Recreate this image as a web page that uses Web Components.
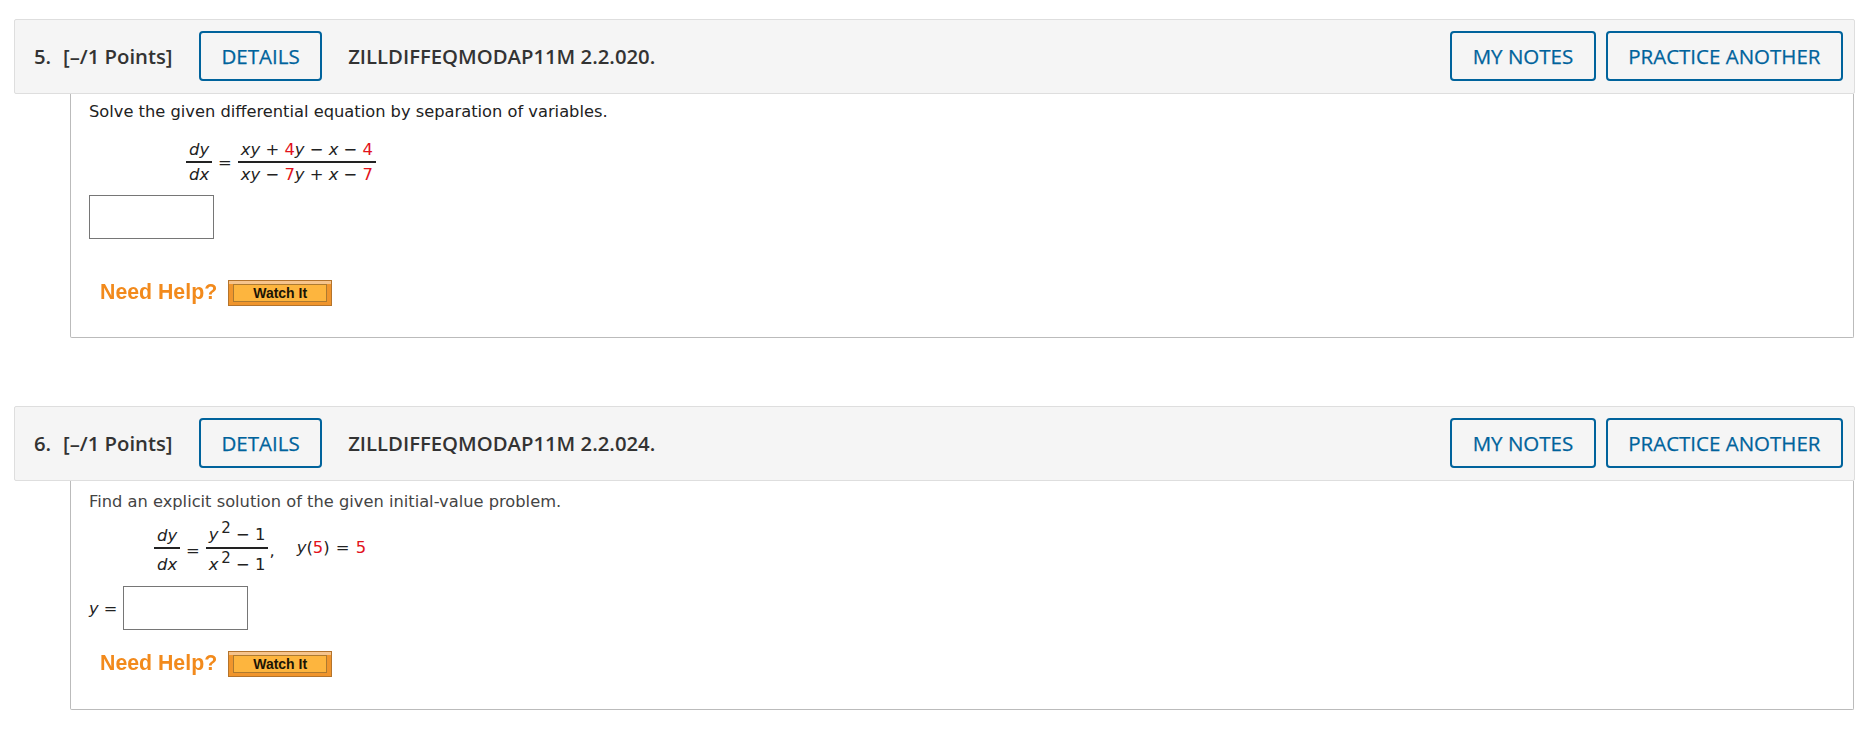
<!DOCTYPE html>
<html>
<head>
<meta charset="utf-8">
<title>Questions</title>
<style>
  body { margin: 0; background: #fff; }
</style>
</head>
<body>
<assignment-page>
  <question-card num="5." code="ZILLDIFFEQMODAP11M 2.2.020." height="244">
    <q-text top="0">Solve the given differential equation by separation of variables.</q-text>
    <q-eq indent="97" top="16" style="--frac-gap:2px">
      <m-frac><i>dy</i><i slot="bottom">dx</i></m-frac>
      <m-op>=</m-op>
      <m-frac><span><i>xy</i> + <m-red>4</m-red><i>y</i> − <i>x</i> − <m-red>4</m-red></span><span slot="bottom"><i>xy</i> − <m-red>7</m-red><i>y</i> + <i>x</i> − <m-red>7</m-red></span></m-frac>
    </q-eq>
    <answer-box top="11"></answer-box>
    <help-row top="41"></help-row>
  </question-card>
  <question-card num="6." code="ZILLDIFFEQMODAP11M 2.2.024." height="229">
    <q-text top="3" style="color:#444">Find an explicit solution of the given initial-value problem.</q-text>
    <q-eq indent="65" top="11" style="--frac-gap:6px">
      <m-frac><i>dy</i><i slot="bottom">dx</i></m-frac>
      <m-op>=</m-op>
      <m-frac><span><i>y</i><m-sup>2</m-sup> − 1</span><span slot="bottom"><i>x</i><m-sup>2</m-sup> − 1</span></m-frac>
      <m-op gap="1">,</m-op>
      <m-op gap="16" style="word-spacing:1px;padding-bottom:5px"><i>y</i>(<m-red>5</m-red>) = <m-red>5</m-red></m-op>
    </q-eq>
    <answer-box label="y" top="11"></answer-box>
    <help-row top="21"></help-row>
  </question-card>
</assignment-page>

<template id="page-tpl">
  <style>
    :host { display: flex; flex-direction: column; gap: 68px; padding: 19px 7px 0 14px; font-family: "DejaVu Sans", sans-serif; }
  </style>
  <slot></slot>
</template>

<template id="card-tpl">
  <style>
    :host { display: block; }
    .bar {
      display: flex; align-items: center; height: 72px; padding: 0 11px 1px 19px;
      background: #f5f5f5; border: 1px solid #dedede; border-radius: 2px;
      font: 600 20.3px "Open Sans", sans-serif; color: #333;
    }
    .num { width: 29px; }
    .pts { width: 136px; }
    .code { margin-left: 26px; flex: 1; }
    .bar q-button + q-button { margin-left: 10px; }
    .body {
      box-sizing: border-box; margin-left: 56px; margin-right: 1px; padding: 6px 18px 0;
      border: 1px solid #bbb; border-top: 0; border-radius: 0 0 2px 2px;
    }
  </style>
  <div class="bar">
    <span class="num"></span><span class="pts">[–/1 Points]</span>
    <q-button>DETAILS</q-button>
    <span class="code"></span>
    <q-button>MY NOTES</q-button>
    <q-button>PRACTICE ANOTHER</q-button>
  </div>
  <div class="body"><slot></slot></div>
</template>

<template id="button-tpl">
  <style>
    :host {
      display: inline-flex; align-items: center; box-sizing: border-box; height: 50px; padding: 0 20.5px;
      background: transparent; border: 2px solid #00639c; border-radius: 4px;
      font: 500 20.5px "Open Sans", sans-serif; color: #00639c; white-space: nowrap;
      -webkit-text-stroke: .25px #00639c;
    }
  </style>
  <slot></slot>
</template>

<template id="frac-tpl">
  <style>
    :host { display: inline-flex; flex-direction: column; text-align: center; }
    .t { padding: 0 3px 2px; border-bottom: 2px solid #222; line-height: 19px; white-space: nowrap; }
    .b { padding: var(--frac-gap, 3px) 3px 0; line-height: 19px; white-space: nowrap; }
  </style>
  <div class="t"><slot></slot></div>
  <div class="b"><slot name="bottom"></slot></div>
</template>

<template id="help-tpl">
  <style>
    :host { display: flex; align-items: center; gap: 11px; padding: 0 0 0 11px; }
    .need { margin-top: -2px; font: 700 21.3px "Liberation Sans", sans-serif; color: #f28a1c; filter: blur(.3px); }
    .watch {
      box-sizing: border-box; width: 104px; height: 26px; padding: 3px 4px;
      background: linear-gradient(#f6c48c 0 3px, #f0952c 3px); border: 1px solid #b4742c;
    }
    .watch div {
      box-sizing: border-box; height: 100%; background: #fdb53e; border: 1px solid #ad7a30;
      font: 700 14px/17px "Liberation Sans", sans-serif; color: #1b1405; text-align: center;
    }
  </style>
  <span class="need">Need Help?</span>
  <div class="watch"><div>Watch It</div></div>
</template>

<script>
function shadowFrom(el, id) {
  el.attachShadow({ mode: "open" }).appendChild(document.getElementById(id).content.cloneNode(true));
}

class AssignmentPage extends HTMLElement {
  constructor() { super(); shadowFrom(this, "page-tpl"); }
}

class QuestionCard extends HTMLElement {
  constructor() { super(); shadowFrom(this, "card-tpl"); }
  connectedCallback() {
    this.shadowRoot.querySelector(".num").textContent = this.getAttribute("num");
    this.shadowRoot.querySelector(".code").textContent = this.getAttribute("code");
    this.shadowRoot.querySelector(".body").style.height = this.getAttribute("height") + "px";
  }
}

class QButton extends HTMLElement {
  constructor() { super(); shadowFrom(this, "button-tpl"); }
}

class QText extends HTMLElement {
  constructor() {
    super();
    this.attachShadow({ mode: "open" }).innerHTML = `
      <style>:host { display: block; font: 16.27px/24px "DejaVu Sans", sans-serif; color: #222; }</style>
      <slot></slot>`;
  }
  connectedCallback() { this.style.marginTop = this.getAttribute("top") + "px"; }
}

class QEq extends HTMLElement {
  constructor() {
    super();
    this.attachShadow({ mode: "open" }).innerHTML = `
      <style>:host { display: flex; align-items: center; font: 16.4px "DejaVu Sans", sans-serif; color: #222; }</style>
      <slot></slot>`;
  }
  connectedCallback() {
    this.style.paddingLeft = this.getAttribute("indent") + "px";
    this.style.marginTop = this.getAttribute("top") + "px";
  }
}

class MFrac extends HTMLElement {
  constructor() { super(); shadowFrom(this, "frac-tpl"); }
}

class MOp extends HTMLElement {
  constructor() {
    super();
    this.attachShadow({ mode: "open" }).innerHTML = `
      <style>:host { display: inline-block; margin: 0 6px; white-space: nowrap; }</style>
      <slot></slot>`;
  }
  connectedCallback() {
    if (this.hasAttribute("gap")) this.style.marginLeft = this.getAttribute("gap") + "px";
  }
}

class MRed extends HTMLElement {
  constructor() {
    super();
    this.attachShadow({ mode: "open" }).innerHTML = `<style>:host { color: #e2131b; }</style><slot></slot>`;
  }
}

class MSup extends HTMLElement {
  constructor() {
    super();
    this.attachShadow({ mode: "open" }).innerHTML = `
      <style>:host { position: relative; top: -7px; font-size: 15px; margin-left: -2px; }</style>
      <slot></slot>`;
  }
}

class AnswerBox extends HTMLElement {
  constructor() {
    super();
    this.attachShadow({ mode: "open" }).innerHTML = `
      <style>
        :host { display: flex; align-items: center; font: 16.2px "DejaVu Sans", sans-serif; color: #222; }
        .label { margin-right: 6px; }
        .label:empty { display: none; }
        .box { box-sizing: border-box; width: 125px; height: 44px; background: #fff; border: 1px solid #767676; }
      </style>
      <span class="label"></span><div class="box"></div>`;
  }
  connectedCallback() {
    const label = this.getAttribute("label");
    if (label) this.shadowRoot.querySelector(".label").innerHTML = "<i>" + label + "</i> =";
    this.style.marginTop = this.getAttribute("top") + "px";
  }
}

class HelpRow extends HTMLElement {
  constructor() { super(); shadowFrom(this, "help-tpl"); }
  connectedCallback() { this.style.marginTop = this.getAttribute("top") + "px"; }
}

customElements.define("assignment-page", AssignmentPage);
customElements.define("question-card", QuestionCard);
customElements.define("q-button", QButton);
customElements.define("q-text", QText);
customElements.define("q-eq", QEq);
customElements.define("m-frac", MFrac);
customElements.define("m-op", MOp);
customElements.define("m-red", MRed);
customElements.define("m-sup", MSup);
customElements.define("answer-box", AnswerBox);
customElements.define("help-row", HelpRow);
</script>
</body>
</html>
